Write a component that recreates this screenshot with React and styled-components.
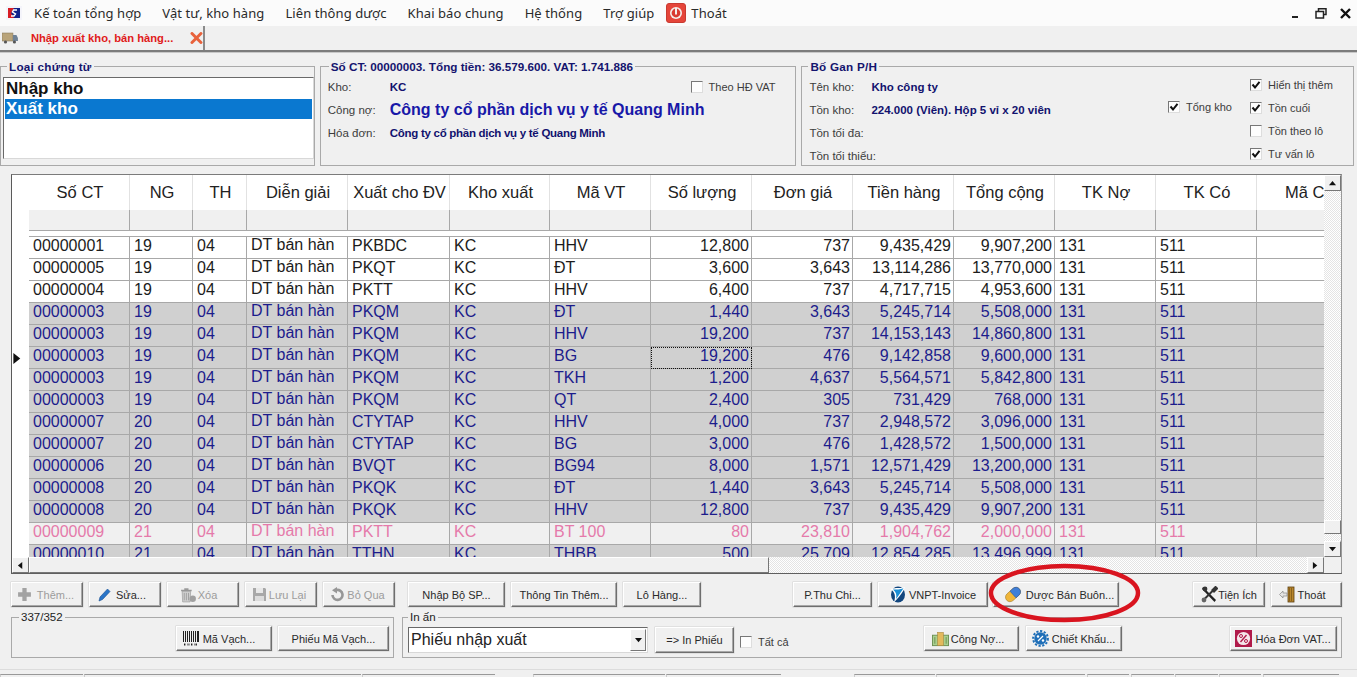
import React from 'react';
import styled, { createGlobalStyle } from 'styled-components';

const GlobalStyle = createGlobalStyle`
  html, body { margin: 0; padding: 0; background: #f0f0f0; }
  #root { width: 1357px; height: 677px; overflow: hidden; }
`;

const COLS = '17px 101px 63px 54px 101px 102px 100px 101px 101px 101px 101px 101px 101px 101px 68px';

const CHECKER = `repeating-conic-gradient(#e4e4e4 0 25%, #fff 0 50%) 0 0 / 2px 2px`;

const Page = styled.div`
  position: relative;
  width: 1357px;
  height: 677px;
  overflow: hidden;
  background: #f0f0f0;
  font-family: "Liberation Sans", Arial, sans-serif;
  font-size: 12px;
  color: #222;
`;

// thanh menu
const MenuBar = styled.div`
  display: flex;
  align-items: center;
  height: 26px;
  padding: 0 6px;
  background: #fbfbfb;
`;
const MenuItem = styled.span`
  font-family: "Noto Sans", sans-serif;
  font-size: 13px;
  letter-spacing: 0.08px;
  color: #2a2a2a;
  margin-left: ${p => p.$ml || 21}px;
  white-space: nowrap;
`;
const WindowButtons = styled.div`
  display: flex;
  align-items: center;
  gap: 13px;
  margin-left: auto;
`;

// thanh tab
const TabBar = styled.div`
  height: 24px;
  display: flex;
  border-bottom: 2px solid #7c7c7c;
  box-shadow: 0 1px 0 #c8c8c8;
`;
const Tab = styled.div`
  width: 205px;
  box-sizing: border-box;
  display: flex;
  align-items: center;
  padding-left: 2px;
  border-right: 2px solid #8b8b8b;
`;
const TabTitle = styled.span`
  width: 160px;
  margin-left: 13px;
  color: #e01a1a;
  font-size: 11.2px;
  font-weight: bold;
  white-space: nowrap;
`;

// 3 khung tren
const TopPanels = styled.div`
  display: flex;
  gap: 5px;
  padding: 8px 3px 0 0;
`;
const GroupBox = styled.fieldset`
  box-sizing: border-box;
  width: ${p => p.$w}px;
  height: ${p => p.$h}px;
  margin: 0;
  padding: 0;
  min-width: 0;
  border: 1px solid #a9a9a9;
  display: ${p => (p.$row ? 'flex' : 'block')};
`;
const GroupTitle = styled.legend`
  margin-left: ${p => p.$ml || 6}px;
  padding: 0 2px;
  font-size: ${p => (p.$plain ? 11.5 : 11.7)}px;
  letter-spacing: ${p => (p.$wide ? 0.25 : 0)}px;
  line-height: 13px;
  white-space: nowrap;
  font-weight: ${p => (p.$plain ? 'normal' : 'bold')};
  color: ${p => (p.$plain ? '#222' : '#14146e')};
`;
const ListBox = styled.div`
  box-sizing: border-box;
  height: 82px;
  margin: 4px 0 0 2px;
  padding: 1px 1px 0 1px;
  width: 311px;
  background: #fff;
  border-top: 1px solid #696969;
  border-left: 1px solid #696969;
  border-right: 1px solid #d8d8d8;
  border-bottom: 1px solid #d8d8d8;
`;
const ListItem = styled.div`
  height: 20px;
  line-height: 20px;
  padding-left: 1px;
  font-size: 17px;
  font-weight: bold;
  color: ${p => (p.$active ? '#fff' : '#111')};
  background: ${p => (p.$active ? '#0a78d0' : 'transparent')};
`;
const InfoGrid = styled.div`
  display: grid;
  grid-template-columns: 62px 1fr;
  grid-auto-rows: 23px;
  align-items: center;
  padding: 2px 0 0 7px;
  flex: ${p => (p.$grow ? 1 : 'none')};
  align-content: start;
`;
const Label = styled.span`
  color: #3c3c3c;
  font-size: 11.5px;
  white-space: nowrap;
`;
const Value = styled.span`
  color: #12126e;
  font-weight: bold;
  font-size: ${p => (p.$big ? '16px' : '11.5px')};
  white-space: nowrap;
  ${p => p.$big && 'color: #1818a8;'}
  ${p => p.$tight && 'letter-spacing: -0.28px;'}
`;
const ValueWithCheck = styled.div`
  display: flex;
  align-items: center;
  justify-content: space-between;
  padding-right: 20px;
`;
const CheckRow = styled.label`
  display: flex;
  align-items: center;
  gap: 6px;
  height: 23px;
  font-size: 11px;
  color: #3c3c3c;
  white-space: nowrap;
`;
const CheckColumn = styled.div`
  display: flex;
  flex-direction: column;
  width: ${p => p.$w}px;
  padding-top: ${p => p.$top || 0}px;
`;
const CheckBoxMark = styled.span`
  box-sizing: border-box;
  width: 12px;
  height: 12px;
  display: inline-flex;
  flex: none;
  align-items: center;
  justify-content: center;
  background: #fdfdfd;
  border: 1px solid;
  border-color: #777 #ddd #ddd #777;
`;

// luoi du lieu
const GridFrame = styled.div`
  box-sizing: border-box;
  width: 1331px;
  height: 400px;
  margin: 8px 0 0 11px;
  display: flex;
  flex-direction: column;
  border-top: 1px solid #7b7b7b;
  border-left: 1px solid #5a5a5a;
  border-right: 1px solid #9a9a9a;
  border-bottom: 2px solid #5f5f5f;
  background: #f0f0f0;
`;
const GridMain = styled.div`
  display: flex;
  height: 382px;
`;
const GridBody = styled.div`
  width: 1313px;
  overflow: hidden;
  background: #fff;
`;
const GridRow = styled.div`
  display: grid;
  grid-template-columns: ${COLS};
  height: ${p => p.$h}px;
`;
const HeaderCell = styled.div`
  box-sizing: border-box;
  display: flex;
  align-items: center;
  justify-content: ${p => (p.$left ? 'flex-start' : 'center')};
  padding-left: ${p => p.$left || 2}px;
  padding-bottom: 1px;
  font-size: 16.5px;
  color: #222;
  white-space: nowrap;
  overflow: hidden;
  border-right: 1px solid #e2e2e2;
`;
const FilterCell = styled.div`
  background: #f0f0f0;
  border-right: 1px solid #a8a8a8;
  border-bottom: 1px solid #a8a8a8;
`;
const GapRow = styled.div`
  height: 5px;
  margin-left: 17px;
  background: #fff;
  border-bottom: 1px solid #a8a8a8;
`;
const IndicatorCell = styled.div`
  background: #fff;
  display: flex;
  align-items: center;
`;
const Cell = styled.div`
  box-sizing: border-box;
  position: relative;
  height: 22px;
  line-height: ${p => (p.$raised ? 16 : 18)}px;
  padding: 0 ${p => (p.$num ? 2 : 0)}px 0 ${p => (p.$num ? 0 : 4)}px;
  text-align: ${p => (p.$num ? 'right' : 'left')};
  font-size: 16px;
  white-space: nowrap;
  overflow: hidden;
  color: ${p => p.$fg};
  background: ${p => p.$bg};
  border-right: 1px solid #a8a8a8;
  border-bottom: 1px solid #a8a8a8;
  ${p => p.$focus && 'outline: 1px dotted #111; outline-offset: -1px;'}
`;
const VScroll = styled.div`
  width: 17px;
  display: flex;
  flex-direction: column;
  background: ${CHECKER};
`;
const HScroll = styled.div`
  height: 16px;
  display: flex;
  background: ${CHECKER};
`;
const ScrollButton = styled.div`
  box-sizing: border-box;
  width: ${p => p.$w || 17}px;
  height: ${p => p.$h || 16}px;
  display: flex;
  align-items: center;
  justify-content: center;
  background: #f0f0f0;
  border: 1px solid;
  border-color: #fff #777 #777 #fff;
  margin-top: ${p => p.$mt || 0}px;
  margin-left: ${p => p.$ml || 0}px;
`;
const ScrollCorner = styled.div`
  width: 17px;
  background: #f0f0f0;
`;

// nut bam
const ButtonRow = styled.div`
  display: flex;
  height: 25px;
  margin: 8px 0 0 11px;
`;
const Cluster = styled.div`
  display: flex;
  gap: 6px;
  margin-left: ${p => p.$ml || 0}px;
`;
const Btn = styled.button`
  box-sizing: border-box;
  width: ${p => p.$w}px;
  height: ${p => p.$h || 25}px;
  margin: ${p => p.$mt || 0}px 0 0 ${p => p.$ml || 0}px;
  padding: 0 ${p => p.$pr || 0}px 0 ${p => p.$pl || 0}px;
  display: flex;
  flex: none;
  align-items: center;
  justify-content: center;
  gap: ${p => p.$gap ?? 2}px;
  background: #f0f0f0;
  border: 1px solid;
  border-color: #fff #6e6e6e #6e6e6e #fff;
  box-shadow: inset -1px -1px 0 #a8a8a8, 0 0 0 0.5px #cfcfcf;
  font-family: "Liberation Sans", Arial, sans-serif;
  font-size: 11px;
  color: ${p => (p.disabled ? '#9c9c9c' : '#2a2a2a')};
  white-space: nowrap;
`;
const BottomPanels = styled.div`
  display: flex;
  gap: 8px;
  margin: 4px 0 0 11px;
`;
const GroupInner = styled.div`
  display: flex;
  align-items: center;
  height: 29px;
  padding: ${p => p.$pad};
  justify-content: ${p => (p.$end ? 'flex-end' : 'flex-start')};
  gap: ${p => p.$gap || 0}px;
`;
const SelectBox = styled.div`
  box-sizing: border-box;
  width: 240px;
  height: 26px;
  margin-top: 3px;
  display: flex;
  align-items: center;
  justify-content: space-between;
  padding: 0 1px 0 2px;
  background: #fff;
  border: 1px solid;
  border-color: #696969 #d8d8d8 #d8d8d8 #696969;
  font-size: 16px;
  color: #222;
`;
const SelectArrow = styled.span`
  box-sizing: border-box;
  width: 16px;
  height: 22px;
  display: flex;
  align-items: center;
  justify-content: center;
  background: #f0f0f0;
  border: 1px solid;
  border-color: #fff #777 #777 #fff;
`;
const PlainCheck = styled.label`
  display: flex;
  align-items: center;
  gap: 6px;
  margin-left: 6px;
  font-size: 11px;
  color: #3c3c3c;
  white-space: nowrap;
  padding-top: 6px;
`;

// thanh trang thai
const StatusBar = styled.div`
  display: flex;
  margin-top: 11px;
  height: 8px;
  padding-top: 4px;
  box-sizing: border-box;
  border-top: 1px solid #dcdcdc;
`;
const StatusPanel = styled.div`
  box-sizing: border-box;
  width: ${p => p.$w}px;
  margin: 0 ${p => p.$mr || 1}px 0 0;
  border-top: 1px solid #999;
  border-left: 1px solid #ccc;
`;

// vong tron do khoanh nut
const Annotation = styled.svg`
  position: absolute;
  left: 985px;
  top: 561px;
  pointer-events: none;
`;

const Triangle = ({ dir = 'down', color = '#111', size = 7 }) => {
  const pts = {
    down: '0,1 8,1 4,6',
    up: '0,6 8,6 4,1',
    left: '6,0 6,8 1,4',
    right: '1,0 1,8 6,4',
  };
  return (
    <svg width={size} height={size} viewBox="0 0 8 8" style={{ display: 'block' }}>
      <polygon points={pts[dir]} fill={color} />
    </svg>
  );
};

const CheckTick = () => (
  <svg width="10" height="10" viewBox="0 0 10 10">
    <path d="M1.5 4.5 L4 7.5 L8.5 1.8" fill="none" stroke="#111" strokeWidth="2" />
  </svg>
);

const Check = ({ on }) => <CheckBoxMark>{on && <CheckTick />}</CheckBoxMark>;

const LogoIcon = () => (
  <svg width="16" height="14" viewBox="0 0 16 14">
    <rect x="0" y="0" width="16" height="14" fill="#f4f4fa" />
    <rect x="2" y="2" width="12" height="10" fill="#10228a" />
    <path d="M2 2 H8 L5 7 L8 12 H2 Z" fill="#d81c24" />
    <path d="M11 4 H7.5 L6.5 6 L9.5 8 L8 10 H5" fill="none" stroke="#fff" strokeWidth="1.4" />
  </svg>
);

const PowerIcon = () => (
  <svg width="20" height="20" viewBox="0 0 20 20" style={{ marginLeft: 12, marginRight: -16 }}>
    <rect x="0.5" y="0.5" width="19" height="19" rx="2.5" fill="#e5453a" stroke="#c83a30" />
    <circle cx="10" cy="10" r="6" fill="#f4f0ec" />
    <circle cx="10" cy="10" r="4.4" fill="#d83a30" />
    <rect x="9" y="5" width="2" height="6.5" fill="#f4f0ec" />
  </svg>
);

const TruckIcon = () => (
  <svg width="16" height="12" viewBox="0 0 16 12">
    <rect x="0" y="1" width="11" height="8" fill="#b9a47a" stroke="#8a7a5c" strokeWidth="0.6" />
    <path d="M11 3 H14.5 L16 6 V9 H11 Z" fill="#6f8296" />
    <circle cx="3.5" cy="10" r="1.6" fill="#555" />
    <circle cx="12.5" cy="10" r="1.6" fill="#555" />
  </svg>
);

const TabCloseIcon = () => (
  <svg width="13" height="12" viewBox="0 0 13 12">
    <path d="M2 1.5 L11 10.5 M11 1.5 L2 10.5" stroke="#e8623c" strokeWidth="3" strokeLinecap="round" />
  </svg>
);

const MinimizeIcon = () => (
  <svg width="11" height="11" viewBox="0 0 11 11"><rect x="1" y="8" width="6" height="2" fill="#222" /></svg>
);
const RestoreIcon = () => (
  <svg width="12" height="11" viewBox="0 0 12 11">
    <path d="M3.5 3 V0.8 H11 V6.5 H8.5" fill="none" stroke="#222" strokeWidth="1.5" />
    <rect x="1" y="3.5" width="7.5" height="6.5" fill="none" stroke="#222" strokeWidth="1.5" />
  </svg>
);
const CloseIcon = () => (
  <svg width="11" height="11" viewBox="0 0 11 11">
    <path d="M1 1 L10 10 M10 1 L1 10" stroke="#111" strokeWidth="2.4" />
  </svg>
);

const PlusIcon = () => (
  <svg width="15" height="15" viewBox="0 0 14 14" style={{ marginRight: 3 }}>
    <path d="M5 1 H9 V5 H13 V9 H9 V13 H5 V9 H1 V5 H5 Z" fill="#a3a3a3" />
  </svg>
);
const PencilIcon = () => (
  <svg width="13" height="14" viewBox="0 0 13 14" style={{ marginRight: 3 }}>
    <path d="M9.5 1 L12 3.5 L4.5 11.5 L1 13 L2 9 Z" fill="#2a75c8" stroke="#1a4f90" strokeWidth="0.6" />
  </svg>
);
const TrashIcon = () => (
  <svg width="17" height="17" viewBox="0 0 16 16">
    <path d="M1 3.5 H11 V5 H1 Z M4 2 H8 V3.5 H4 Z" fill="#9a9a9a" />
    <path d="M2 5 H10 L9.5 15 H2.5 Z" fill="#cfcfcf" stroke="#8a8a8a" strokeWidth="0.5" />
    <path d="M4 6.5 V13.5 M6 6.5 V13.5 M8 6.5 V13.5" stroke="#9a9a9a" strokeWidth="0.8" />
    <circle cx="12" cy="12" r="3" fill="#a0a0a0" />
  </svg>
);
const SaveIcon = () => (
  <svg width="15" height="15" viewBox="0 0 15 15">
    <path d="M1 1 H13 L14 2 V14 H1 Z" fill="#a8a8a8" />
    <rect x="4" y="1" width="7" height="5" fill="#e8e8e8" />
    <rect x="3" y="9" width="9" height="5" fill="#dcdcdc" />
  </svg>
);
const UndoIcon = () => (
  <svg width="15" height="15" viewBox="0 0 15 15" style={{ marginRight: 1 }}>
    <path d="M3.5 8 A5 5 0 1 0 7.5 3" fill="none" stroke="#979797" strokeWidth="2.6" />
    <polygon points="8,0 8,6.5 3,3.2" fill="#979797" />
  </svg>
);
const VnptIcon = () => (
  <svg width="16" height="17" viewBox="0 0 16 17">
    <ellipse cx="8" cy="8.5" rx="7" ry="8" fill="#12467e" />
    <path d="M0.5 3 C6 1 11 3 15 1 C13 7 8 12 4 16.5 C6 10 5 6 0.5 3 Z" fill="#fff" />
    <path d="M3 3.6 C7 3.4 10 3.6 13.5 2.2 C11 6 9 9 6 13 C7 9 6 6 3 3.6 Z" fill="#1b8fd6" />
  </svg>
);
const PillIcon = () => (
  <svg width="18" height="17" viewBox="0 0 18 17">
    <g transform="rotate(-42 9 8.5)">
      <rect x="0.5" y="4" width="17" height="9" rx="4.5" fill="#f0b63a" stroke="#a5802c" strokeWidth="0.6" />
      <path d="M9 4 H13 A4.5 4.5 0 0 1 13 13 H9 Z" fill="#3f7fd8" stroke="#2a5aa5" strokeWidth="0.6" />
    </g>
  </svg>
);
const ToolsIcon = () => (
  <svg width="17" height="17" viewBox="0 0 17 17">
    <path d="M2 1 L15 14 L13.5 16 L1 3 Z" fill="#222" />
    <path d="M14.5 1 L16 2.5 L13 5.5 L11.5 4 Z M12 4.5 L3 13.5" stroke="#333" strokeWidth="2" fill="#333" />
    <circle cx="3" cy="14" r="2.4" fill="#666" />
    <circle cx="4" cy="3" r="2.4" fill="#333" />
  </svg>
);
const DoorIcon = () => (
  <svg width="16" height="17" viewBox="0 0 16 17">
    <rect x="9" y="1" width="6" height="15" fill="#b8862c" stroke="#5a3e10" strokeWidth="0.8" />
    <path d="M10.5 2 V15 M12.5 2 V15" stroke="#6b4a14" strokeWidth="0.6" />
    <path d="M0.5 8.5 L4 5 V7 H8 V10 H4 V12 Z" fill="#e4e4e4" stroke="#888" strokeWidth="0.7" />
  </svg>
);
const BarcodeIcon = () => (
  <svg width="17" height="15" viewBox="0 0 17 15">
    <path d="M0.5 0 V11 M2.5 0 V11 M4.5 0 V11 M6.5 0 V11 M8.5 0 V11 M10.5 0 V11 M12.5 0 V11 M14.5 0 V11 M15.5 0 V11" stroke="#222" strokeWidth="1" />
    <path d="M1 13.5 H3 M4.5 13.5 H6.5 M8 13.5 H10 M11.5 13.5 H14" stroke="#222" strokeWidth="2" strokeDasharray="1 0.6" />
  </svg>
);
const MoneyIcon = () => (
  <svg width="17" height="16" viewBox="0 0 18 16">
    <rect x="0.5" y="4" width="17" height="11" fill="#a9cf8e" stroke="#6b8f52" />
    <rect x="6" y="1" width="6" height="14" fill="#e3b95c" stroke="#a8853a" strokeWidth="0.6" />
    <path d="M3 6 V13 M15 6 V13" stroke="#6b8f52" />
  </svg>
);
const GearIcon = () => (
  <svg width="17" height="17" viewBox="0 0 17 17">
    <circle cx="8.5" cy="8.5" r="6.2" fill="#1f6fb8" />
    <circle cx="8.5" cy="8.5" r="7.4" fill="none" stroke="#1f6fb8" strokeWidth="2" strokeDasharray="2.2 1.6" />
    <path d="M6 11 L11 6" stroke="#fff" strokeWidth="1.2" />
    <circle cx="6" cy="6.5" r="1.2" fill="#fff" />
    <circle cx="11" cy="10.5" r="1.2" fill="#fff" />
  </svg>
);
const VatIcon = () => (
  <svg width="17" height="17" viewBox="0 0 17 17">
    <rect width="17" height="17" fill="#b01a4a" />
    <circle cx="8.5" cy="8.5" r="6.6" fill="#f5e6ea" />
    <path d="M5.5 12 L11.5 5" stroke="#b01a4a" strokeWidth="1.4" />
    <circle cx="6" cy="6" r="1.5" fill="none" stroke="#b01a4a" />
    <circle cx="11" cy="11" r="1.5" fill="none" stroke="#b01a4a" />
  </svg>
);

const HEADERS = ['Số CT', 'NG', 'TH', 'Diễn giải', 'Xuất cho ĐV', 'Kho xuất', 'Mã VT', 'Số lượng', 'Đơn giá', 'Tiền hàng', 'Tổng cộng', 'TK Nợ', 'TK Có'];

const ROWS = [
  ['00000001', '19', 'PKBDC', 'HHV', '12,800', '737', '9,435,429', '9,907,200', 'plain'],
  ['00000005', '19', 'PKQT', 'ĐT', '3,600', '3,643', '13,114,286', '13,770,000', 'plain'],
  ['00000004', '19', 'PKTT', 'HHV', '6,400', '737', '4,717,715', '4,953,600', 'plain'],
  ['00000003', '19', 'PKQM', 'ĐT', '1,440', '3,643', '5,245,714', '5,508,000', 'grey'],
  ['00000003', '19', 'PKQM', 'HHV', '19,200', '737', '14,153,143', '14,860,800', 'grey'],
  ['00000003', '19', 'PKQM', 'BG', '19,200', '476', '9,142,858', '9,600,000', 'grey'],
  ['00000003', '19', 'PKQM', 'TKH', '1,200', '4,637', '5,564,571', '5,842,800', 'grey'],
  ['00000003', '19', 'PKQM', 'QT', '2,400', '305', '731,429', '768,000', 'grey'],
  ['00000007', '20', 'CTYTAP', 'HHV', '4,000', '737', '2,948,572', '3,096,000', 'grey'],
  ['00000007', '20', 'CTYTAP', 'BG', '3,000', '476', '1,428,572', '1,500,000', 'grey'],
  ['00000006', '20', 'BVQT', 'BG94', '8,000', '1,571', '12,571,429', '13,200,000', 'grey'],
  ['00000008', '20', 'PKQK', 'ĐT', '1,440', '3,643', '5,245,714', '5,508,000', 'grey'],
  ['00000008', '20', 'PKQK', 'HHV', '12,800', '737', '9,435,429', '9,907,200', 'grey'],
  ['00000009', '21', 'PKTT', 'BT 100', '80', '23,810', '1,904,762', '2,000,000', 'pink'],
  ['00000010', '21', 'TTHN', 'THBB', '500', '25,709', '12,854,285', '13,496,999', 'grey'],
];

const TONES = {
  plain: { fg: '#1c1c1c', bg: '#fff' },
  grey: { fg: '#1c1c8c', bg: '#d0d0d0' },
  pink: { fg: '#e57aaa', bg: '#f0f0f0' },
};

const STATUS = [
  [83, 1], [277, 1], [133, 38], [132, 1], [115, 73], [81, 1], [149, 2], [42, 2], [43, 1], [43, 1], [42, 2], [76, 0],
];

function DataRow({ row, index }) {
  const [ct, ng, dv, vt, sl, gia, tien, tong, tone] = row;
  const { fg, bg } = TONES[tone];
  const cell = { $fg: fg, $bg: bg };
  return (
    <GridRow $h={22}>
      <IndicatorCell>{index === 5 && <Triangle dir="right" size={11} />}</IndicatorCell>
      <Cell {...cell}>{ct}</Cell>
      <Cell {...cell}>{ng}</Cell>
      <Cell {...cell}>04</Cell>
      <Cell {...cell} $raised>DT bán hàn</Cell>
      <Cell {...cell}>{dv}</Cell>
      <Cell {...cell}>KC</Cell>
      <Cell {...cell}>{vt}</Cell>
      <Cell {...cell} $num $focus={index === 5}>{sl}</Cell>
      <Cell {...cell} $num>{gia}</Cell>
      <Cell {...cell} $num>{tien}</Cell>
      <Cell {...cell} $num>{tong}</Cell>
      <Cell {...cell}>131</Cell>
      <Cell {...cell}>511</Cell>
      <Cell {...cell} />
    </GridRow>
  );
}

export default function App() {
  return (
    <Page>
      <GlobalStyle />
      <MenuBar>
        <LogoIcon />
        <MenuItem $ml={12}>Kế toán tổng hợp</MenuItem>
        <MenuItem>Vật tư, kho hàng</MenuItem>
        <MenuItem>Liên thông dược</MenuItem>
        <MenuItem>Khai báo chung</MenuItem>
        <MenuItem>Hệ thống</MenuItem>
        <MenuItem>Trợ giúp</MenuItem>
        <PowerIcon />
        <MenuItem>Thoát</MenuItem>
        <WindowButtons>
          <MinimizeIcon />
          <RestoreIcon />
          <CloseIcon />
        </WindowButtons>
      </MenuBar>

      <TabBar>
        <Tab>
          <TruckIcon />
          <TabTitle>Nhập xuất kho, bán hàng...</TabTitle>
          <TabCloseIcon />
        </Tab>
      </TabBar>

      <TopPanels>
        <GroupBox $w={315} $h={106}>
          <GroupTitle $ml={6} $wide>Loại chứng từ</GroupTitle>
          <ListBox>
            <ListItem>Nhập kho</ListItem>
            <ListItem $active>Xuất kho</ListItem>
          </ListBox>
        </GroupBox>

        <GroupBox $w={477} $h={106}>
          <GroupTitle $ml={8}>Số CT: 00000003. Tổng tiền: 36.579.600. VAT: 1.741.886</GroupTitle>
          <InfoGrid>
            <Label>Kho:</Label>
            <ValueWithCheck>
              <Value>KC</Value>
              <CheckRow>
                <Check />
                Theo HĐ VAT
              </CheckRow>
            </ValueWithCheck>
            <Label>Công nợ:</Label>
            <Value $big>Công ty cổ phần dịch vụ y tế Quang Minh</Value>
            <Label>Hóa đơn:</Label>
            <Value $tight>Công ty cổ phần dịch vụ y tế Quang Minh</Value>
          </InfoGrid>
        </GroupBox>

        <GroupBox $w={553} $h={106} $row>
          <GroupTitle $wide>Bố Gan P/H</GroupTitle>
          <InfoGrid $grow>
            <Label>Tên kho:</Label>
            <Value>Kho công ty</Value>
            <Label>Tồn kho:</Label>
            <Value>224.000 (Viên). Hộp 5 vỉ x 20 viên</Value>
            <Label>Tồn tối đa:</Label>
            <span />
            <Label>Tồn tối thiểu:</Label>
            <span />
          </InfoGrid>
          <CheckColumn $w={82} $top={22}>
            <CheckRow>
              <Check on />
              Tổng kho
            </CheckRow>
          </CheckColumn>
          <CheckColumn $w={103}>
            <CheckRow><Check on />Hiển thị thêm</CheckRow>
            <CheckRow><Check on />Tồn cuối</CheckRow>
            <CheckRow><Check />Tồn theo lô</CheckRow>
            <CheckRow><Check on />Tư vấn lô</CheckRow>
          </CheckColumn>
        </GroupBox>
      </TopPanels>

      <GridFrame>
        <GridMain>
          <GridBody>
            <GridRow $h={35}>
              <div />
              {HEADERS.map(h => <HeaderCell key={h}>{h}</HeaderCell>)}
              <HeaderCell $left={28}>Mã CT</HeaderCell>
            </GridRow>
            <GridRow $h={21}>
              <div />
              {HEADERS.map(h => <FilterCell key={h} />)}
              <FilterCell />
            </GridRow>
            <GapRow />
            {ROWS.map((row, i) => <DataRow key={i} row={row} index={i} />)}
          </GridBody>
          <VScroll>
            <ScrollButton><Triangle dir="up" /></ScrollButton>
            <ScrollButton $h={14} $mt={329} />
            <ScrollButton $mt={7}><Triangle dir="down" /></ScrollButton>
          </VScroll>
        </GridMain>
        <HScroll>
          <ScrollButton><Triangle dir="left" /></ScrollButton>
          <ScrollButton $w={741} />
          <ScrollButton $ml={538}><Triangle dir="right" /></ScrollButton>
          <ScrollCorner />
        </HScroll>
      </GridFrame>

      <ButtonRow>
        <Cluster>
          <Btn $w={72} $pr={3} disabled><PlusIcon />Thêm...</Btn>
          <Btn $w={72} $pr={6}><PencilIcon />Sửa...</Btn>
          <Btn $w={72} $pr={9} $gap={1} disabled><TrashIcon />Xóa</Btn>
          <Btn $w={72} $pr={4} disabled><SaveIcon />Lưu Lại</Btn>
          <Btn $w={72} $pr={4} disabled><UndoIcon />Bỏ Qua</Btn>
        </Cluster>
        <Cluster $ml={13}>
          <Btn $w={97}>Nhập Bộ SP...</Btn>
          <Btn $w={106}>Thông Tin Thêm...</Btn>
          <Btn $w={78}>Lô Hàng...</Btn>
        </Cluster>
        <Cluster $ml={92}>
          <Btn $w={79}>P.Thu Chi...</Btn>
          <Btn $w={110} $gap={3}><VnptIcon />VNPT-Invoice</Btn>
          <Btn $w={126} $gap={4} $pl={6} $ml={-1}><PillIcon />Dược Bán Buôn...</Btn>
        </Cluster>
        <Cluster $ml={74}>
          <Btn $w={72} $gap={0}><ToolsIcon />Tiện Ích</Btn>
          <Btn $w={71} $gap={2} $pr={8}><DoorIcon />Thoát</Btn>
        </Cluster>
      </ButtonRow>

      <BottomPanels>
        <GroupBox $w={383} $h={47}>
          <GroupTitle $plain $ml={7}>337/352</GroupTitle>
          <GroupInner $pad="0 4px 0 0" $end $gap={6}>
            <Btn $w={96} $gap={3} $pr={10}><BarcodeIcon />Mã Vạch...</Btn>
            <Btn $w={111}>Phiếu Mã Vạch...</Btn>
          </GroupInner>
        </GroupBox>
        <GroupBox $w={940} $h={47}>
          <GroupTitle $plain $ml={5}>In ấn</GroupTitle>
          <GroupInner $pad="0 0 0 5px">
            <SelectBox>
              Phiếu nhập xuất
              <SelectArrow><Triangle dir="down" /></SelectArrow>
            </SelectBox>
            <Btn $w={79} $h={26} $ml={7} $mt={3}>=&gt; In Phiếu</Btn>
            <PlainCheck>
              <Check />
              Tất cả
            </PlainCheck>
            <Btn $w={95} $gap={2} $pr={6} $ml={135}><MoneyIcon />Công Nợ...</Btn>
            <Btn $w={96} $gap={3} $ml={7}><GearIcon />Chiết Khấu...</Btn>
            <Btn $w={107} $gap={3} $ml={108}><VatIcon />Hóa Đơn VAT...</Btn>
          </GroupInner>
        </GroupBox>
      </BottomPanels>

      <StatusBar>
        {STATUS.map(([w, mr], i) => <StatusPanel key={i} $w={w} $mr={mr} />)}
      </StatusBar>

      <Annotation width="160" height="66" viewBox="0 0 160 66">
        <ellipse cx="79.5" cy="32" rx="73.5" ry="27" fill="none" stroke="#d9141f" strokeWidth="4.5" />
      </Annotation>
    </Page>
  );
}
